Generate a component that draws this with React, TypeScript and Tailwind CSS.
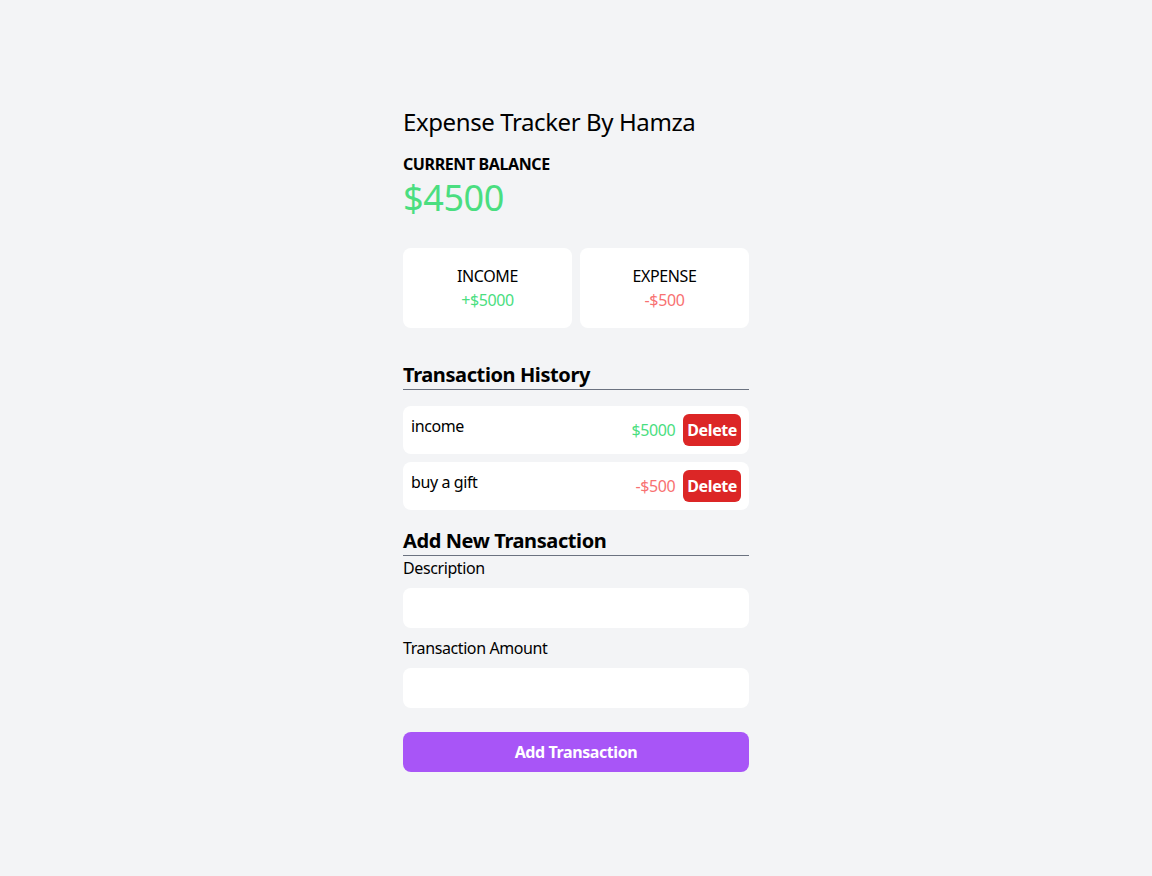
import { useState } from "react";

type Txn = { id: number; text: string; amount: number };

function App() {
  const [transactions, setTransactions] = useState<Txn[]>([
    { id: 1, text: "income", amount: 5000 },
    { id: 2, text: "buy a gift", amount: -500 },
  ]);
  const [text, setText] = useState("");
  const [amount, setAmount] = useState("");

  const income = transactions
    .filter((t) => t.amount > 0)
    .reduce((a, t) => a + t.amount, 0);
  const expense = transactions
    .filter((t) => t.amount < 0)
    .reduce((a, t) => a + t.amount, 0);
  const balance = income + expense;

  const addTransaction = () => {
    if (!text || !amount) return;
    setTransactions([
      ...transactions,
      { id: Date.now(), text, amount: Number(amount) },
    ]);
    setText("");
    setAmount("");
  };

  return (
    <div className="min-h-screen bg-[#f3f4f6] font-['Noto_Sans',sans-serif] tracking-[-0.025em] text-black">
      <div className="w-[346px] mx-auto pt-[106px] pb-10">
        <h1 className="text-2xl">Expense Tracker By Hamza</h1>

        <h4 className="mt-[14px] font-bold uppercase">Current Balance</h4>
        <h2 className="mt-[2px] text-4xl text-[#4ade80]">${balance}</h2>

        <div className="mt-[30px] grid grid-cols-2 gap-2">
          <div className="h-20 bg-white rounded-lg flex flex-col items-center justify-center">
            <h4 className="uppercase">Income</h4>
            <p className="text-[#4ade80]">+${income}</p>
          </div>
          <div className="h-20 bg-white rounded-lg flex flex-col items-center justify-center">
            <h4 className="uppercase">Expense</h4>
            <p className="text-[#f87171]">-${Math.abs(expense)}</p>
          </div>
        </div>

        <h3 className="mt-[33px] text-xl font-bold border-b border-[#6b7280]">
          Transaction History
        </h3>
        <ul className="mt-4 flex flex-col gap-2">
          {transactions.map((t) => (
            <li
              key={t.id}
              className="bg-white rounded-lg p-2 flex justify-between"
            >
              <span>{t.text}</span>
              <div className="flex items-center gap-2">
                <span
                  className={t.amount < 0 ? "text-[#f87171]" : "text-[#4ade80]"}
                >
                  {t.amount < 0 ? "-" : ""}${Math.abs(t.amount)}
                </span>
                <button
                  className="h-8 px-1 bg-[#dc2626] text-white font-bold rounded-md"
                  onClick={() =>
                    setTransactions(transactions.filter((x) => x.id !== t.id))
                  }
                >
                  Delete
                </button>
              </div>
            </li>
          ))}
        </ul>

        <h3 className="mt-[17px] text-xl font-bold border-b border-[#6b7280]">
          Add New Transaction
        </h3>
        <div className="flex flex-col">
          <label>Description</label>
          <input
            className="mt-2 h-10 bg-white rounded-lg px-3 outline-none"
            value={text}
            onChange={(e) => setText(e.target.value)}
          />
          <label className="mt-2">Transaction Amount</label>
          <input
            type="number"
            className="mt-2 h-10 bg-white rounded-lg px-3 outline-none"
            value={amount}
            onChange={(e) => setAmount(e.target.value)}
          />
          <button
            className="mt-6 h-10 bg-[#a855f7] text-white font-bold rounded-lg"
            onClick={addTransaction}
          >
            Add Transaction
          </button>
        </div>
      </div>
    </div>
  );
}

export default App;
